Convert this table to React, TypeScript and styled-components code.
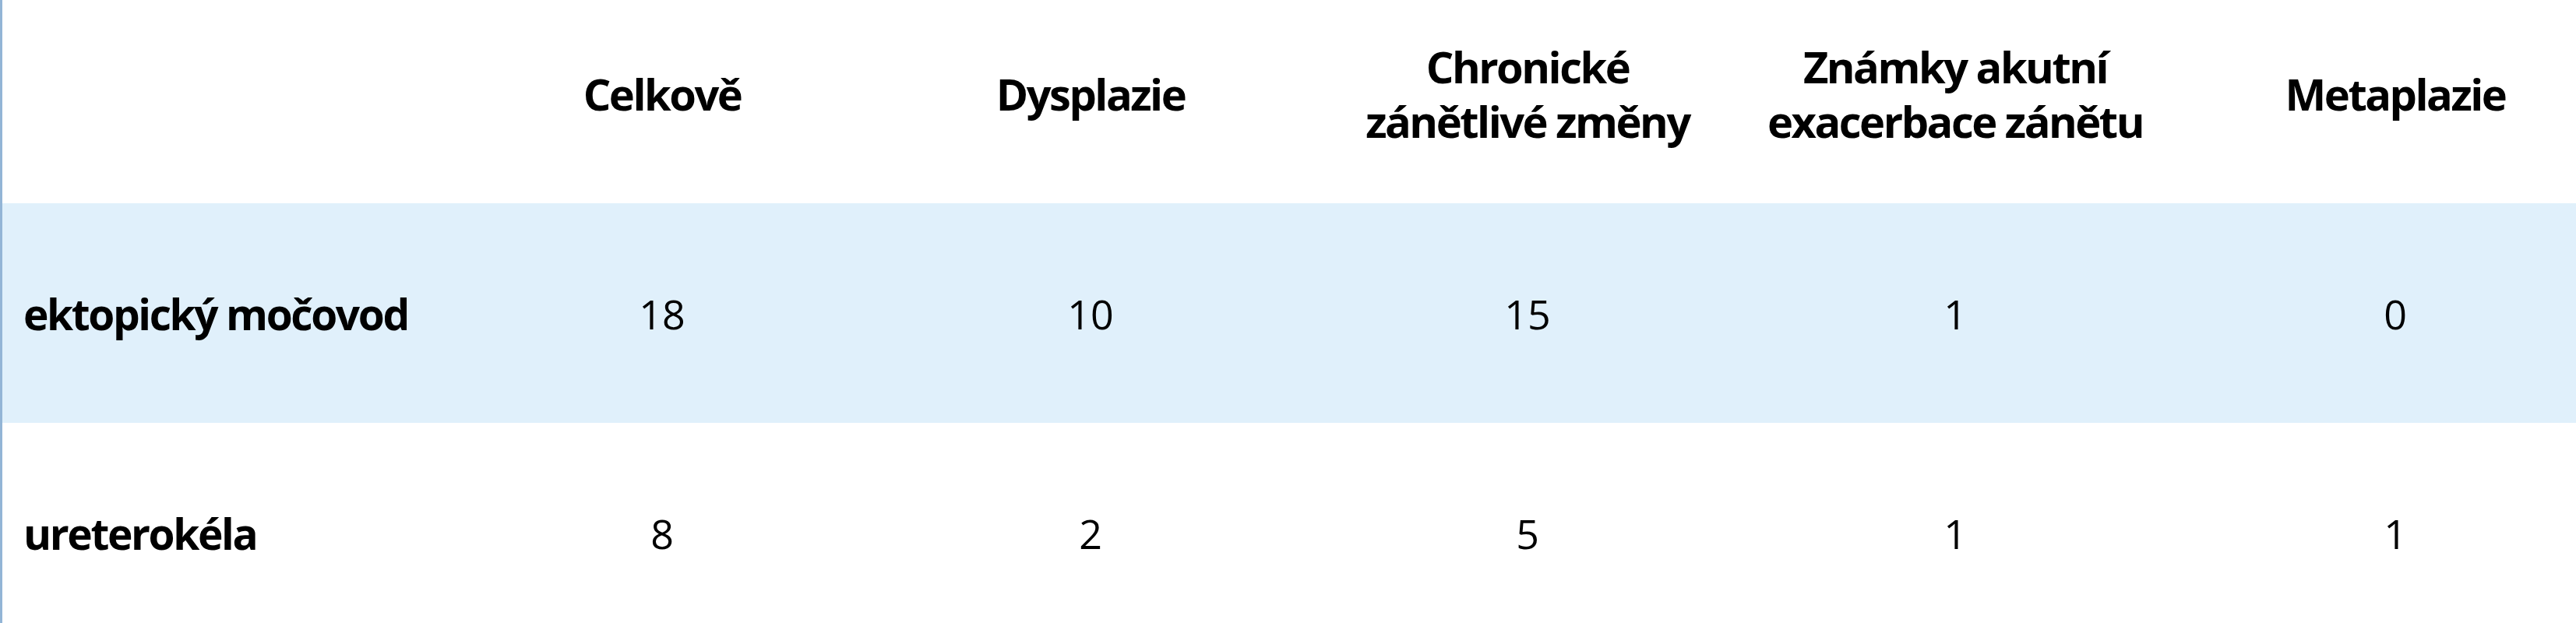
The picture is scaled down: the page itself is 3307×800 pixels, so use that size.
import React from 'react';
import styled, { createGlobalStyle } from 'styled-components';

const GlobalStyle = createGlobalStyle`
    html, body {
        margin: 0;
        padding: 0;
        background: #ffffff;
    }
    body {
        font-family: "Open Sans", "Noto Sans", "Liberation Sans", sans-serif;
        color: #000;
    }
`;

interface RowData {
    label: string;
    values: number[];
}

const headers: React.ReactNode[] = [
    'Celkově',
    'Dysplazie',
    <>Chronické<br />zánětlivé změny</>,
    <>Známky akutní<br />exacerbace zánětu</>,
    'Metaplazie',
];

const rows: RowData[] = [
    { label: 'ektopický močovod', values: [18, 10, 15, 1, 0] },
    { label: 'ureterokéla', values: [8, 2, 5, 1, 1] },
];

const Table = styled.div`
    width: 3307px;
    border-left: 3px solid #93b5d6;
    box-sizing: border-box;
`;

const Row = styled.div<{ $striped?: boolean; $height: number }>`
    display: grid;
    grid-template-columns: 642px 410px 690px 432px 666px 464px;
    height: ${p => p.$height}px;
    background: ${p => (p.$striped ? '#e0f0fb' : '#ffffff')};
`;

const HeadCell = styled.div`
    display: flex;
    align-items: center;
    justify-content: center;
    padding-bottom: 22px;
    text-align: center;
    font-weight: 700;
    font-size: 56px;
    line-height: 70px;
    letter-spacing: -2.5px;
`;

const LabelCell = styled.div`
    display: flex;
    align-items: center;
    padding-left: 27px;
    font-weight: 700;
    font-size: 55px;
    letter-spacing: -2.4px;
    white-space: nowrap;
`;

const ValueCell = styled.div`
    display: flex;
    align-items: center;
    justify-content: center;
    font-weight: 400;
    font-size: 52px;
`;

const App: React.FC = () => {
    return (
        <>
            <GlobalStyle />
            <Table>
                <Row $height={261}>
                    <HeadCell />
                    {headers.map((h, i) => (
                        <HeadCell key={i}>{h}</HeadCell>
                    ))}
                </Row>
                {rows.map((row, i) => (
                    <Row key={row.label} $height={282} $striped={i % 2 === 0}>
                        <LabelCell>{row.label}</LabelCell>
                        {row.values.map((v, j) => (
                            <ValueCell key={j}>{v}</ValueCell>
                        ))}
                    </Row>
                ))}
            </Table>
        </>
    );
};

export default App;
